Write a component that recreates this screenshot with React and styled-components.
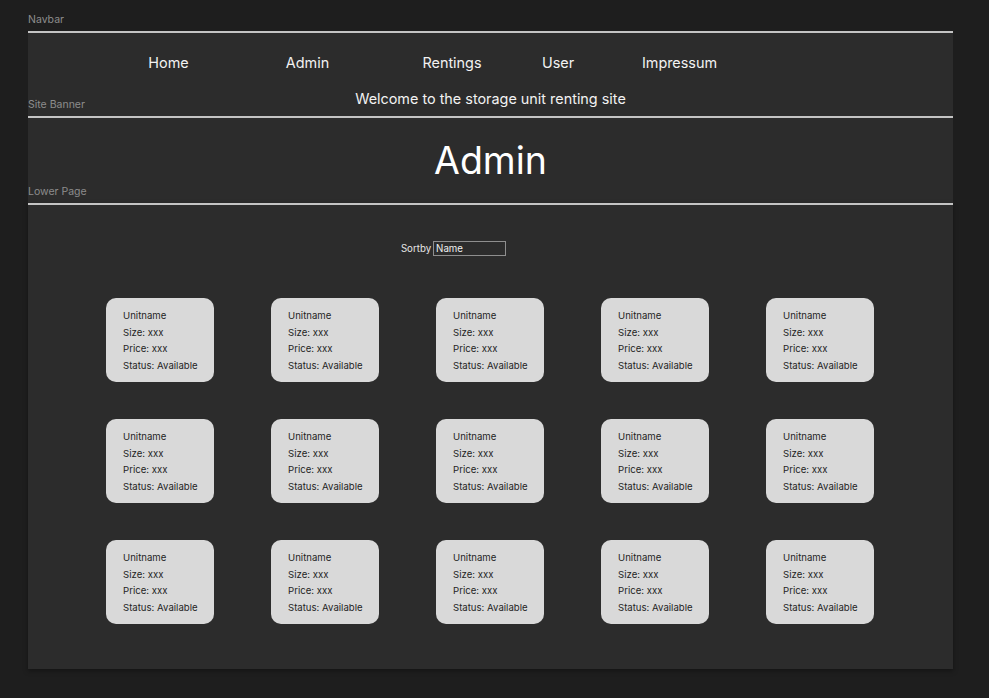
import React from "react";
import styled, { createGlobalStyle } from "styled-components";

const Global = createGlobalStyle`
  html, body { margin: 0; padding: 0; background: #1e1e1e; }
  body { font-family: Inter, "Noto Sans", "Liberation Sans", sans-serif; }
  #root { min-height: 698px; }
`;

const Canvas = styled.div`
  min-height: 698px;
  box-sizing: border-box;
  padding: 31px 0 0 28px;
  display: flex;
  flex-direction: column;
`;

const Frame = styled.section`
  position: relative;
  width: 925px;
  height: ${(p) => p.$h}px;
  box-sizing: border-box;
  background: #2c2c2c;
  border-top: 2px solid #c4c4c4;
  box-shadow: ${(p) => (p.$shadow ? "0 2px 5px rgba(0,0,0,0.35)" : "none")};
`;

const FrameLabel = styled.span`
  position: absolute;
  left: 0;
  bottom: calc(100% + 7px);
  font-size: 10.5px;
  line-height: 13px;
  color: #8d8d8d;
  white-space: nowrap;
  z-index: 2;
`;

const NavRow = styled.nav`
  display: flex;
  align-items: center;
  height: 20px;
  margin-top: 20px;
  padding-left: 90.5px;
`;

const NavLink = styled.a`
  width: 100px;
  flex: none;
  margin-left: ${(p) => p.$offset}px;
  text-align: center;
  font-size: 14.4px;
  line-height: 20px;
  color: #f2f2f2;
  text-decoration: none;
`;

const Welcome = styled.p`
  margin: 16px 0 0;
  text-align: center;
  font-size: 14.4px;
  line-height: 20px;
  color: #f2f2f2;
`;

const Title = styled.h1`
  margin: 0;
  padding-top: 20px;
  text-align: center;
  font-weight: 400;
  font-size: 37.5px;
  line-height: 46px;
  color: #ffffff;
`;

const SortRow = styled.div`
  display: flex;
  justify-content: center;
  align-items: center;
  gap: 2px;
  margin-top: 36px;
  padding-right: 74px;
  font-size: 9.7px;
  color: #e6e6e6;
`;

const SortInput = styled.input`
  width: 73px;
  height: 15px;
  box-sizing: border-box;
  margin: 0;
  padding: 0 2px;
  background: transparent;
  border: 1px solid #8e8e8e;
  color: #f0f0f0;
  font-family: inherit;
  font-size: 9.7px;
  line-height: 13px;
  outline: none;
`;

const Grid = styled.div`
  display: grid;
  grid-template-columns: repeat(5, 108px);
  grid-auto-rows: 84px;
  column-gap: 57px;
  row-gap: 37px;
  margin: 42px 0 0 78px;
`;

const Card = styled.div`
  box-sizing: border-box;
  background: #d9d9d9;
  border-radius: 10px;
  padding: 10px 0 0 17px;
  display: flex;
  flex-direction: column;
`;

const CardLine = styled.span`
  font-size: 9.6px;
  line-height: 16.7px;
  color: #1f1f1f;
  white-space: nowrap;
`;

const links = [
  { label: "Home", offset: 0 },
  { label: "Admin", offset: 39 },
  { label: "Rentings", offset: 44.5 },
  { label: "User", offset: 6 },
  { label: "Impressum", offset: 21.5 },
];

const units = Array.from({ length: 15 }, (_, i) => i);

export default function App() {
  return (
    <>
      <Global />
      <Canvas>
        <Frame $h={85}>
          <FrameLabel>Navbar</FrameLabel>
          <NavRow>
            {links.map((l) => (
              <NavLink key={l.label} $offset={l.offset}>
                {l.label}
              </NavLink>
            ))}
          </NavRow>
          <Welcome>Welcome to the storage unit renting site</Welcome>
        </Frame>
        <Frame $h={87}>
          <FrameLabel>Site Banner</FrameLabel>
          <Title>Admin</Title>
        </Frame>
        <Frame $h={466} $shadow>
          <FrameLabel>Lower Page</FrameLabel>
          <SortRow>
            <span>Sortby</span>
            <SortInput defaultValue="Name" />
          </SortRow>
          <Grid>
            {units.map((i) => (
              <Card key={i}>
                <CardLine>Unitname</CardLine>
                <CardLine>Size: xxx</CardLine>
                <CardLine>Price: xxx</CardLine>
                <CardLine>Status: Available</CardLine>
              </Card>
            ))}
          </Grid>
        </Frame>
      </Canvas>
    </>
  );
}
